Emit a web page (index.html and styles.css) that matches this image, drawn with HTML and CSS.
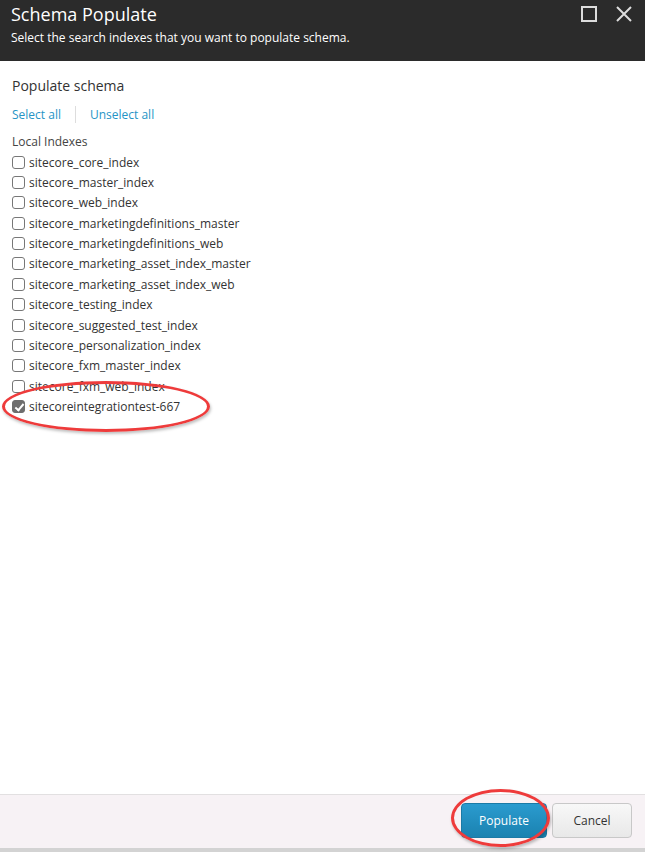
FILE: index.html
```html
<!DOCTYPE html>
<html lang="en">
<head>
  <meta charset="UTF-8" />
  <title>Schema Populate</title>
  <link rel="stylesheet" href="styles.css">
</head>
<body>
  <div class="dialog">
    <div class="header">
      <div class="header-text">
        <h1>Schema Populate</h1>
        <p>Select the search indexes that you want to populate schema.</p>
      </div>
      <div class="header-icons">
        <svg width="18" height="18" viewBox="0 0 18 18"><rect x="2" y="2" width="14" height="14" fill="none" stroke="#ddd" stroke-width="2"/></svg>
        <svg width="18" height="18" viewBox="0 0 18 18"><path d="M2 2 L16 16 M16 2 L2 16" stroke="#ddd" stroke-width="2"/></svg>
      </div>
    </div>

    <div class="content">
      <h2>Populate schema</h2>
      <div class="links">
        <a href="#">Select all</a>
        <span class="sep"></span>
        <a href="#">Unselect all</a>
      </div>
      <div class="group-label">Local Indexes</div>
      <ul class="indexes">
        <li><label><input type="checkbox"> sitecore_core_index</label></li>
        <li><label><input type="checkbox"> sitecore_master_index</label></li>
        <li><label><input type="checkbox"> sitecore_web_index</label></li>
        <li><label><input type="checkbox"> sitecore_marketingdefinitions_master</label></li>
        <li><label><input type="checkbox"> sitecore_marketingdefinitions_web</label></li>
        <li><label><input type="checkbox"> sitecore_marketing_asset_index_master</label></li>
        <li><label><input type="checkbox"> sitecore_marketing_asset_index_web</label></li>
        <li><label><input type="checkbox"> sitecore_testing_index</label></li>
        <li><label><input type="checkbox"> sitecore_suggested_test_index</label></li>
        <li><label><input type="checkbox"> sitecore_personalization_index</label></li>
        <li><label><input type="checkbox"> sitecore_fxm_master_index</label></li>
        <li><label><input type="checkbox"> sitecore_fxm_web_index</label></li>
        <li class="marked"><label><input type="checkbox" checked> sitecoreintegrationtest-667</label></li>
      </ul>
    </div>

    <div class="footer">
      <button class="btn primary marked-btn">Populate</button>
      <button class="btn">Cancel</button>
    </div>
    <div class="scroll-strip"></div>
  </div>
</body>
</html>
```

FILE: styles.css
```css
body {
  margin: 0;
  font-family: "Open Sans", "Noto Sans", sans-serif;
  background: #fff;
  color: #333;
}
.dialog {
  width: 645px;
  height: 852px;
  display: flex;
  flex-direction: column;
  overflow: hidden;
}
.header {
  background: #2b2b2b;
  height: 61px;
  display: flex;
  justify-content: space-between;
  padding: 0 12px 0 11px;
  flex-shrink: 0;
}
.header h1 {
  margin: 0;
  padding-top: 2px;
  font-size: 18px;
  font-weight: 400;
  color: #fff;
  line-height: 25px;
}
.header p {
  margin: 3px 0 0 0;
  font-size: 12px;
  color: #fff;
  line-height: 16px;
}
.header-icons {
  display: flex;
  gap: 17px;
  padding-top: 5px;
}
.content {
  flex: 1;
  padding: 15px 12px 0 12px;
}
.content h2 {
  margin: 0;
  font-size: 14px;
  font-weight: 400;
  color: #333;
  line-height: 20px;
}
.links {
  display: flex;
  align-items: center;
  margin-top: 9px;
  height: 18px;
}
.links a {
  font-size: 12px;
  color: #2694c6;
  text-decoration: none;
}
.sep {
  width: 1px;
  height: 17px;
  background: #ddd;
  margin: 0 14px 0 14px;
}
.group-label {
  font-size: 12px;
  color: #444;
  margin-top: 11px;
  line-height: 16px;
}
.indexes {
  list-style: none;
  margin: 2px 0 0 0;
  padding: 0;
}
.indexes li {
  height: 20.4px;
  font-size: 12px;
  color: #333;
}
.indexes label {
  display: flex;
  align-items: center;
  gap: 4px;
  height: 20px;
}
.indexes input {
  appearance: none;
  width: 13px;
  height: 13px;
  margin: 0;
  border: 1px solid #777;
  border-radius: 3px;
  background: #fff;
  position: relative;
}
.indexes input:checked {
  background: #6e6e6e;
  border-color: #6e6e6e;
}
.indexes input:checked::after {
  content: "";
  position: absolute;
  left: 3.5px;
  top: 0.5px;
  width: 3px;
  height: 7px;
  border: solid #fff;
  border-width: 0 2px 2px 0;
  transform: rotate(40deg);
}
.marked {
  position: relative;
}
.marked::before {
  content: "";
  position: absolute;
  left: -10px;
  top: -16px;
  width: 202px;
  height: 45px;
  border: 3px solid #ee3b3b;
  border-radius: 50%;
  box-shadow: 1px 2px 3px rgba(0, 0, 0, 0.25);
  pointer-events: none;
}
.footer {
  height: 54px;
  background: #f7f2f5;
  border-top: 1px solid #e2e0e1;
  display: flex;
  justify-content: flex-end;
  align-items: flex-start;
  gap: 5px;
  padding: 8px 13px 0 0;
  box-sizing: border-box;
  flex-shrink: 0;
}
.btn {
  font-family: "Open Sans", "Noto Sans", sans-serif;
  font-size: 12px;
  height: 35px;
  width: 80px;
  border: 1px solid #c8c8c8;
  border-radius: 4px;
  background: linear-gradient(#f8f8f8, #e8e8e8);
  color: #333;
}
.primary {
  width: 86px;
  background: linear-gradient(#2a9bcf, #1b82b0);
  border-color: #1b7aa6;
  color: #fff;
}
.marked-btn {
  position: relative;
}
.marked-btn::before {
  content: "";
  position: absolute;
  left: -11px;
  top: -15px;
  width: 93px;
  height: 52px;
  border: 3px solid #ee3b3b;
  border-radius: 50%;
  box-shadow: 1px 2px 3px rgba(0, 0, 0, 0.25);
}
.scroll-strip {
  height: 4px;
  background: #d3d3d3;
  flex-shrink: 0;
}
```
